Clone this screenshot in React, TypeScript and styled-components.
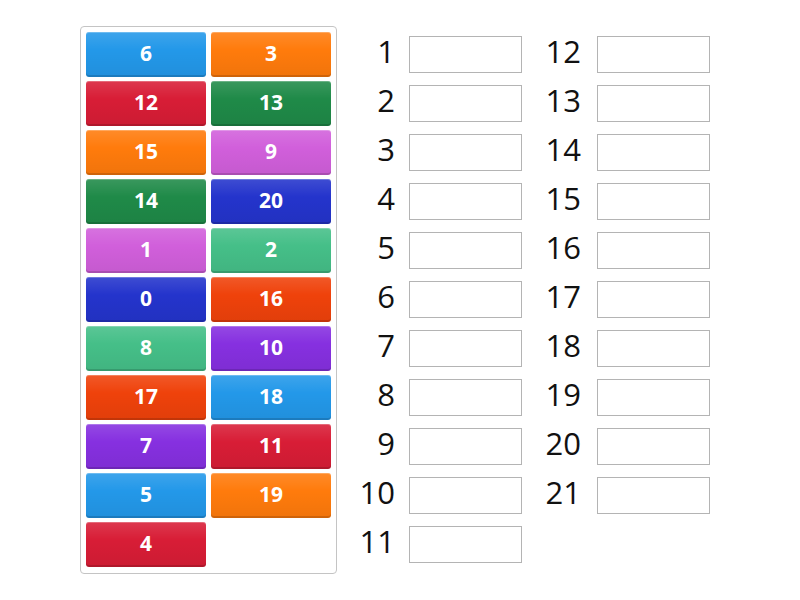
import React from "react";
import styled, { createGlobalStyle } from "styled-components";

const Global = createGlobalStyle`
  html, body { margin: 0; padding: 0; background: #ffffff; }
  body { font-family: "Open Sans", "Noto Sans", sans-serif; }
`;

const Page = styled.div`
  display: flex;
  align-items: flex-start;
  padding: 26px 0 0 80px;
  width: 800px;
  height: 600px;
  box-sizing: border-box;
`;

const Panel = styled.div`
  display: grid;
  grid-template-columns: 120px 120px;
  grid-auto-rows: 45px;
  column-gap: 5px;
  row-gap: 4px;
  padding: 5px 5px 6px;
  border: 1px solid #c4c4c4;
  border-radius: 4px;
  width: 257px;
  box-sizing: border-box;
`;

const Tile = styled.div<{ $c: string }>`
  display: flex;
  align-items: center;
  justify-content: center;
  border-radius: 3px;
  background: ${(p) => p.$c};
  background-image: linear-gradient(
    to bottom,
    rgba(255, 255, 255, 0.12) 0%,
    rgba(255, 255, 255, 0) 40%,
    rgba(0, 0, 0, 0.06) 100%
  );
  box-shadow: inset 0 1px 0 rgba(255, 255, 255, 0.25),
    inset 0 -2px 0 rgba(0, 0, 0, 0.14);
  color: #ffffff;
  font-family: "Open Sans", sans-serif;
  font-weight: 700;
  font-size: 21px;
  line-height: 1;
  padding-bottom: 3px;
  box-sizing: border-box;
`;

const Answers = styled.div`
  display: flex;
  gap: 15px;
  margin-left: 13px;
  margin-top: 4px;
`;

const Column = styled.div`
  display: flex;
  flex-direction: column;
`;

const Row = styled.div`
  display: flex;
  align-items: center;
  height: 49px;
`;

const Label = styled.div<{ $w: number; $gap: number }>`
  width: ${(p) => p.$w}px;
  text-align: right;
  font-family: "Open Sans", sans-serif;
  font-size: 31px;
  line-height: 1;
  color: #111111;
  padding-bottom: 6px;
  margin-right: ${(p) => p.$gap}px;
`;

const Box = styled.div`
  width: 113px;
  height: 37px;
  border: 1px solid #b4b4b4;
  box-sizing: border-box;
  background: #ffffff;
`;

const C = {
  blue: "#2398e9",
  orange: "#ff7b0c",
  red: "#d81d36",
  dgreen: "#1f8a48",
  pink: "#d15fdb",
  navy: "#2434cc",
  lgreen: "#45bf88",
  ored: "#ef420b",
  violet: "#8630e0",
};

const tiles: [string, string][] = [
  ["6", C.blue], ["3", C.orange],
  ["12", C.red], ["13", C.dgreen],
  ["15", C.orange], ["9", C.pink],
  ["14", C.dgreen], ["20", C.navy],
  ["1", C.pink], ["2", C.lgreen],
  ["0", C.navy], ["16", C.ored],
  ["8", C.lgreen], ["10", C.violet],
  ["17", C.ored], ["18", C.blue],
  ["7", C.violet], ["11", C.red],
  ["5", C.blue], ["19", C.orange],
  ["4", C.red],
];

const col1 = Array.from({ length: 11 }, (_, i) => i + 1);
const col2 = Array.from({ length: 10 }, (_, i) => i + 12);

export default function App() {
  return (
    <>
      <Global />
      <Page>
        <Panel>
          {tiles.map(([t, c], i) => (
            <Tile key={i} $c={c}>
              {t}
            </Tile>
          ))}
        </Panel>
        <Answers>
          <Column>
            {col1.map((n) => (
              <Row key={n}>
                <Label $w={45} $gap={14}>
                  {n}
                </Label>
                <Box />
              </Row>
            ))}
          </Column>
          <Column>
            {col2.map((n) => (
              <Row key={n}>
                <Label $w={44} $gap={16}>
                  {n}
                </Label>
                <Box />
              </Row>
            ))}
          </Column>
        </Answers>
      </Page>
    </>
  );
}
